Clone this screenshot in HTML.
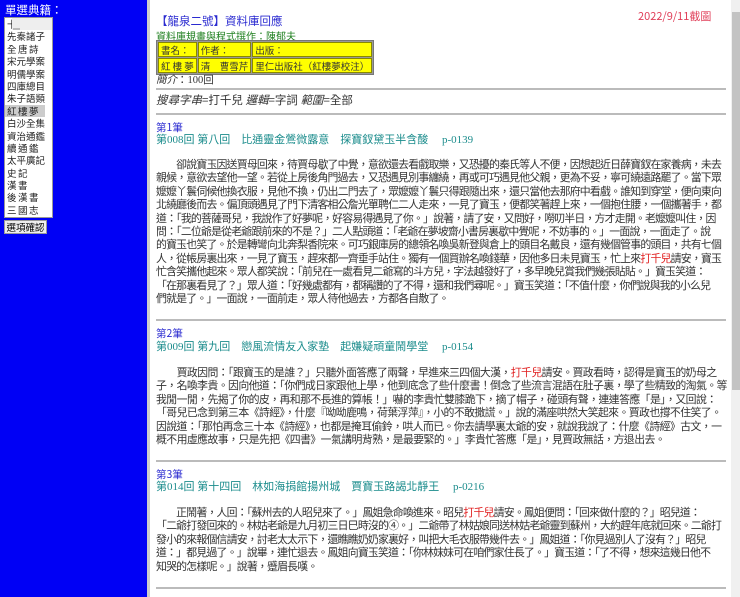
<!DOCTYPE html>
<html><head><meta charset="utf-8"><style>
*{margin:0;padding:0;box-sizing:border-box}
body{width:740px;height:597px;overflow:hidden;background:#fff;font-family:"Liberation Serif","Noto Sans CJK TC",sans-serif;font-size:12px;position:relative}
.left{position:absolute;left:0;top:0;width:148px;height:597px;background:#0000f5}
.left .t{position:absolute;left:5px;top:3px;color:#fff;font-size:11.5px;line-height:14px;font-family:"Noto Sans CJK TC",sans-serif}
.sel{position:absolute;left:4px;top:17px;width:49px;height:201px;background:#fff;border:1px solid #999;overflow:hidden}
.sel div{height:12.4px;line-height:12.4px;font-size:9.5px;padding-left:2px;color:#222;white-space:nowrap;overflow:hidden;font-family:"Noto Sans CJK TC",sans-serif;width:40px}
.sel .s{letter-spacing:1.5px}
.sel .on{background:#ccc}
.sb{position:absolute;right:0;top:0;width:9px;height:199px;background:#eee}
.sb i{position:absolute;left:1px;top:10px;width:7px;height:78px;background:#bbb}
.btn{position:absolute;left:4px;top:220px;width:43px;height:14px;background:#eee;border:1px solid #999;font-size:9.5px;line-height:12px;text-align:center;font-family:"Noto Sans CJK TC",sans-serif;overflow:hidden}
.div{position:absolute;left:147px;top:0;width:3px;height:597px;background:#ccc}
.main{position:absolute;left:156px;top:0;width:572px;height:597px}
.vsb{position:absolute;left:731px;top:0;width:9px;height:597px;background:#f0f0f0}
.vsb i{position:absolute;left:1px;top:12px;width:8px;height:378px;background:#c3c3c3}
.cjk{font-family:"Noto Sans CJK TC",sans-serif}
.a{position:absolute;white-space:nowrap;line-height:13px}
.p{position:absolute;left:0;width:574px;font-size:10.9px;letter-spacing:-0.6px;color:#333;font-family:"Noto Sans CJK TC",sans-serif}
.p div{height:13.4px;line-height:13.4px;white-space:nowrap;overflow:hidden}
.p .x{letter-spacing:-0.8px}
.hr{position:absolute;left:0;width:570px;height:2px;background:#bbb}
.h1{position:absolute;left:0;color:#2a2ad0;font-size:10.5px;line-height:13px;font-family:"Noto Sans CJK TC",sans-serif}
.h2{position:absolute;left:0;color:#1b8c8c;font-size:11px;line-height:13px;font-family:"Liberation Serif","Noto Sans CJK TC",serif;white-space:pre}
.r{color:#e02020}
table{position:absolute;border-collapse:separate;border-spacing:1px;background:#999;border:1px solid #777}
td{background:#ff0;border:1px solid #880;font-size:9.5px;height:15px;line-height:12px;padding:0 2px;color:#333;white-space:nowrap;font-family:"Noto Sans CJK TC",sans-serif}
</style></head><body>
<div class="left"><div class="t">單選典籍：</div>
<div class="sel"><div class="s">十三經</div><div>先秦諸子</div><div class="s">全唐詩</div><div>宋元學案</div><div>明儒學案</div><div>四庫總目</div><div>朱子語類</div><div class="on s">紅樓夢</div><div>白沙全集</div><div>資治通鑑</div><div class="s">續通鑑</div><div>太平廣記</div><div class="s">史記</div><div class="s">漢書</div><div class="s">後漢書</div><div class="s">三國志</div><div class="sb"><i></i></div></div>
<div class="btn">選項確認</div></div>
<div class="div"></div>
<div class="main">
<div class="a cjk" style="left:0;top:15px;color:#2a2ad0;font-size:11.5px">【龍泉二號】資料庫回應</div>
<div class="a cjk" style="left:482px;top:10px;color:#e0405a;font-size:11px">2022/9/11截圖</div>
<div class="a cjk" style="left:0;top:29px;color:#208020;font-size:10px">資料庫規畫與程式撰作：陳郁夫</div>
<table style="left:0;top:40px"><tr><td>書名：</td><td>作者：</td><td style="width:98px">出版：</td></tr><tr><td>紅 樓 夢</td><td>清　曹雪芹</td><td>里仁出版社（紅樓夢校注）</td></tr></table>
<div class="a" style="left:0;top:73px;font-size:10.5px;color:#333"><i class="cjk">簡介</i>：100回</div>
<div class="hr" style="top:88px"></div>
<div class="a cjk" style="left:0;top:94px;font-size:11.5px;color:#333"><i>搜尋字串</i>=打千兒 <i>邏輯</i>=字詞 <i>範圍</i>=全部</div>
<div class="hr" style="top:113px"></div>
<div class="h1" style="top:121px">第1筆</div>
<div class="h2" style="top:134px">第008回 第八回　比通靈金鶯微露意　探寶釵黛玉半含酸　 p-0139</div>
<div class="p" style="top:158px">
<div class="x">　　卻說寶玉因送賈母回來，待賈母歇了中覺，意欲還去看戲取樂，又恐擾的秦氏等人不便，因想起近日薛寶釵在家養病，未去</div>
<div class="x">親候，意欲去望他一望。若從上房後角門過去，又恐遇見別事纏繞，再或可巧遇見他父親，更為不妥，寧可繞遠路罷了。當下眾</div>
<div class="x">嬤嬤丫鬟伺候他換衣服，見他不換，仍出二門去了，眾嬤嬤丫鬟只得跟隨出來，還只當他去那府中看戲。誰知到穿堂，便向東向</div>
<div class="x">北繞廳後而去。偏頂頭遇見了門下清客相公詹光單聘仁二人走來，一見了寶玉，便都笑著趕上來，一個抱住腰，一個攜著手，都</div>
<div class="x">道：「我的菩薩哥兒，我說作了好夢呢，好容易得遇見了你。」說著，請了安，又問好，嘮叨半日，方才走開。老嬤嬤叫住，因</div>
<div class="x">問：「二位爺是從老爺跟前來的不是？」二人點頭道：「老爺在夢坡齋小書房裏歇中覺呢，不妨事的。」一面說，一面走了。說</div>
<div class="x">的寶玉也笑了。於是轉彎向北奔梨香院來。可巧銀庫房的總領名喚吳新登與倉上的頭目名戴良，還有幾個管事的頭目，共有七個</div>
<div class="x">人，從帳房裏出來，一見了寶玉，趕來都一齊垂手站住。獨有一個買辦名喚錢華，因他多日未見寶玉，忙上來<span class="r">打千兒</span>請安，寶玉</div>
<div class="x">忙含笑攜他起來。眾人都笑說：「前兒在一處看見二爺寫的斗方兒，字法越發好了，多早晚兒賞我們幾張貼貼。」寶玉笑道：</div>
<div class="x">「在那裏看見了？」眾人道：「好幾處都有，都稱讚的了不得，還和我們尋呢。」寶玉笑道：「不值什麼，你們說與我的小么兒</div>
<div class="x">們就是了。」一面說，一面前走，眾人待他過去，方都各自散了。</div>
</div>
<div class="hr" style="top:319px"></div>
<div class="h1" style="top:327px">第2筆</div>
<div class="h2" style="top:341px">第009回 第九回　戀風流情友入家塾　起嫌疑頑童鬧學堂　 p-0154</div>
<div class="p" style="top:366px">
<div>　　賈政因問：「跟寶玉的是誰？」只聽外面答應了兩聲，早進來三四個大漢，<span class="r">打千兒</span>請安。賈政看時，認得是寶玉的奶母之</div>
<div>子，名喚李貴。因向他道：「你們成日家跟他上學，他到底念了些什麼書！倒念了些流言混語在肚子裏，學了些精致的淘氣。等</div>
<div>我閒一閒，先揭了你的皮，再和那不長進的算帳！」嚇的李貴忙雙膝跪下，摘了帽子，碰頭有聲，連連答應「是」，又回說：</div>
<div>「哥兒已念到第三本《詩經》，什麼『呦呦鹿鳴，荷葉浮萍』，小的不敢撒謊。」說的滿座哄然大笑起來。賈政也撐不住笑了。</div>
<div>因說道：「那怕再念三十本《詩經》，也都是掩耳偷鈴，哄人而已。你去請學裏太爺的安，就說我說了：什麼《詩經》古文，一</div>
<div>概不用虛應故事，只是先把《四書》一氣講明背熟，是最要緊的。」李貴忙答應「是」，見賈政無話，方退出去。</div>
</div>
<div class="hr" style="top:460px"></div>
<div class="h1" style="top:468px">第3筆</div>
<div class="h2" style="top:481px">第014回 第十四回　林如海捐館揚州城　賈寶玉路謁北靜王　 p-0216</div>
<div class="p" style="top:506px">
<div class="x">　　正鬧著，人回：「蘇州去的人昭兒來了。」鳳姐急命喚進來。昭兒<span class="r">打千兒</span>請安。鳳姐便問：「回來做什麼的？」昭兒道：</div>
<div class="x">「二爺打發回來的。林姑老爺是九月初三日巳時沒的④。」二爺帶了林姑娘同送林姑老爺靈到蘇州，大約趕年底就回來。二爺打</div>
<div class="x">發小的來報個信請安，討老太太示下，還瞧瞧奶奶家裏好，叫把大毛衣服帶幾件去。」鳳姐道：「你見過別人了沒有？」昭兒</div>
<div class="x">道：」都見過了。」說畢，連忙退去。鳳姐向寶玉笑道：「你林妹妹可在咱們家住長了。」寶玉道：「了不得，想來這幾日他不</div>
<div class="x">知哭的怎樣呢。」說著，蹙眉長嘆。</div>
</div>
<div class="hr" style="top:587px"></div>
</div>
<div class="vsb"><i></i></div>
</body></html>
